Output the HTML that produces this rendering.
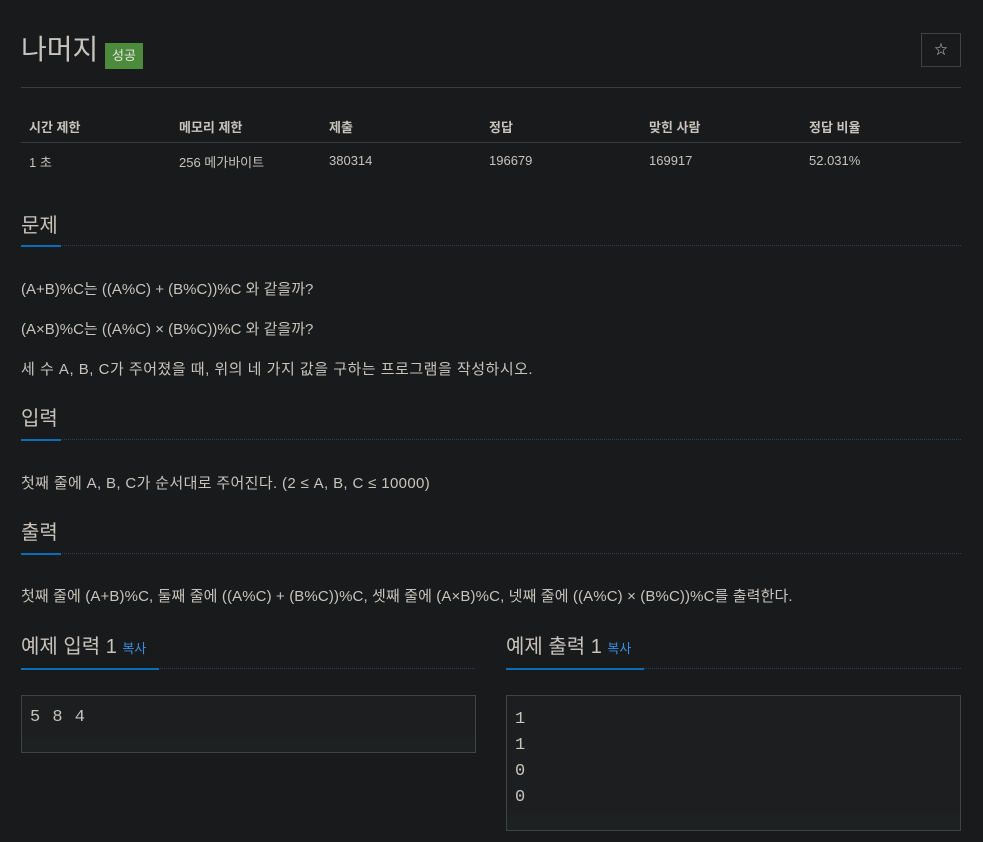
<!DOCTYPE html>
<html><head><meta charset="utf-8"><style>
body{margin:0;background:#181a1b;color:#c8c3bc;font-family:"Liberation Sans","Noto Sans CJK KR",sans-serif;width:983px;height:842px;overflow:hidden;position:relative}
.a{position:absolute;white-space:nowrap}
h1{position:absolute;left:21px;top:30px;margin:0;font-weight:normal;font-size:28px;line-height:40px;color:#c8c3bc}
.badge{position:absolute;left:105px;top:43px;width:38px;height:26px;background:#4b8b3b;color:#e8e6e3;font-size:13px;line-height:26px;text-align:center}
.star{position:absolute;left:921px;top:33px;width:38px;height:32px;border:1px solid #3e4446;font-size:13px;text-align:center;line-height:32px}
.hr{position:absolute;height:1px;background:#3a3e40}
.th{font-weight:bold;font-size:13px;top:117px}
.td{font-size:13px;top:152px}
.h2{font-size:20px;line-height:28px}
.ul{position:absolute;height:0;border-bottom:1px dotted #2a3f55}
.bl{position:absolute;height:2px;background:#0a6fb8}
.p{font-size:15px}
.box{position:absolute;border:1px solid #3e4446;background:#1c1e1f;font-family:"Liberation Mono",monospace;font-size:17px;line-height:26px;padding:11px 8px;box-sizing:border-box}
.box i{position:absolute;left:0;right:0;bottom:0;height:15px;background:#1e2122}
.copy{font-size:13px;color:#3d8fe0}
</style></head><body>
<h1>나머지</h1><div class="badge">성공</div><div class="star">☆</div>
<div class="hr" style="left:21px;width:940px;top:87px"></div>
<div class="a th" style="left:29px">시간 제한</div><div class="a th" style="left:179px">메모리 제한</div><div class="a th" style="left:329px">제출</div><div class="a th" style="left:489px">정답</div><div class="a th" style="left:649px">맞힌 사람</div><div class="a th" style="left:809px">정답 비율</div>
<div class="hr" style="left:21px;width:940px;top:142px"></div>
<div class="a td" style="left:29px">1 초</div><div class="a td" style="left:179px">256 메가바이트</div><div class="a td" style="left:329px;top:153px">380314</div><div class="a td" style="left:489px;top:153px">196679</div><div class="a td" style="left:649px;top:153px">169917</div><div class="a td" style="left:809px;top:153px">52.031%</div>

<div class="a h2" style="left:21px;top:212px">문제</div>
<div class="ul" style="left:21px;width:940px;top:245px"></div><div class="bl" style="left:21px;width:40px;top:245px"></div>
<div class="a p" style="left:21px;top:278px">(A+B)%C는 ((A%C) + (B%C))%C 와 같을까?</div>
<div class="a p" style="left:21px;top:318px">(A×B)%C는 ((A%C) × (B%C))%C 와 같을까?</div>
<div class="a p" style="left:21px;top:358px;letter-spacing:0.5px">세 수 A, B, C가 주어졌을 때, 위의 네 가지 값을 구하는 프로그램을 작성하시오.</div>

<div class="a h2" style="left:21px;top:405px">입력</div>
<div class="ul" style="left:21px;width:940px;top:439px"></div><div class="bl" style="left:21px;width:40px;top:439px"></div>
<div class="a p" style="left:21px;top:472px;letter-spacing:0.35px">첫째 줄에 A, B, C가 순서대로 주어진다. (2 ≤ A, B, C ≤ 10000)</div>

<div class="a h2" style="left:21px;top:519px">출력</div>
<div class="ul" style="left:21px;width:940px;top:553px"></div><div class="bl" style="left:21px;width:40px;top:553px"></div>
<div class="a p" style="left:21px;top:585px;letter-spacing:0.12px">첫째 줄에 (A+B)%C, 둘째 줄에 ((A%C) + (B%C))%C, 셋째 줄에 (A×B)%C, 넷째 줄에 ((A%C) × (B%C))%C를 출력한다.</div>

<div class="a h2" style="left:21px;top:633px">예제 입력 1 <span class="copy">복사</span></div>
<div class="ul" style="left:21px;width:454px;top:668px"></div><div class="bl" style="left:21px;width:138px;top:668px"></div>
<div class="box" style="left:21px;top:695px;width:455px;height:58px;padding-top:9px"><i></i><span style="position:relative;letter-spacing:1px">5 8 4</span></div>

<div class="a h2" style="left:506px;top:633px">예제 출력 1 <span class="copy">복사</span></div>
<div class="ul" style="left:506px;width:455px;top:668px"></div><div class="bl" style="left:506px;width:138px;top:668px"></div>
<div class="box" style="left:506px;top:695px;width:455px;height:136px"><i></i><span style="position:relative">1<br>1<br>0<br>0</span></div>
</body></html>
